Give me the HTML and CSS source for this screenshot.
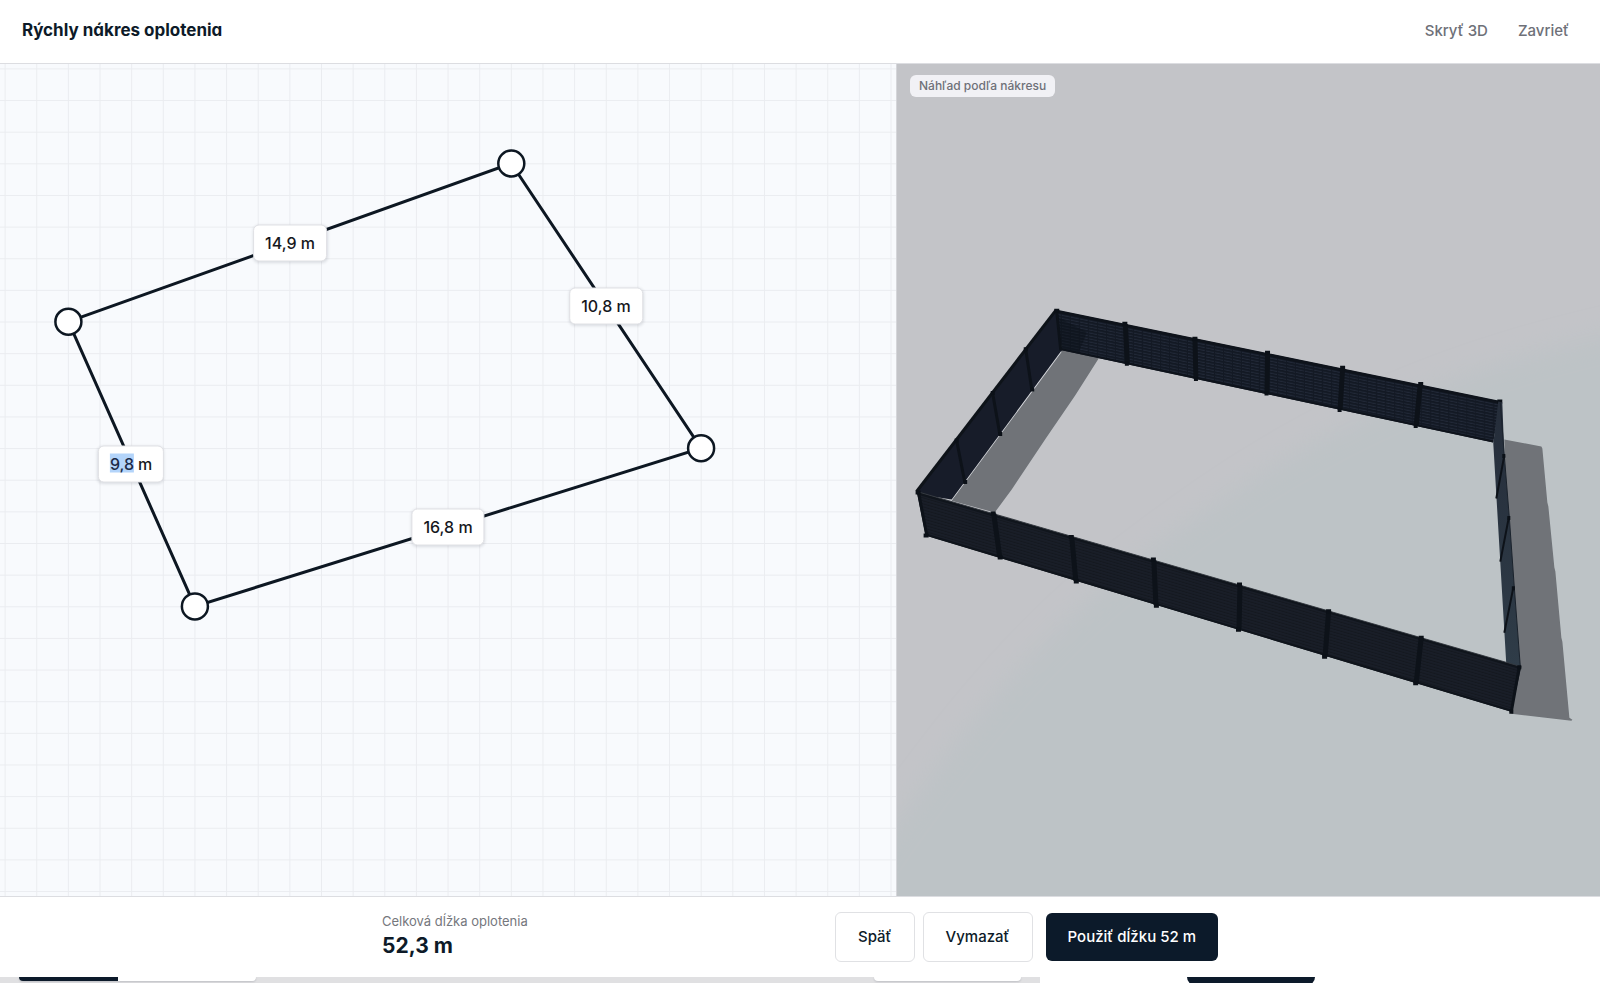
FILE: index.html
```html
<!DOCTYPE html>
<html lang="sk">
<head>
<meta charset="utf-8">
<meta name="viewport" content="width=device-width, initial-scale=1">
<title>Rýchly nákres oplotenia</title>
<link rel="stylesheet" href="styles.css">
</head>
<body>
<div class="app">
  <header class="header">
    <h1 class="title">Rýchly nákres oplotenia</h1>
    <nav class="header-actions">
      <button class="link-btn" type="button">Skryť 3D</button>
      <button class="link-btn" type="button">Zavrieť</button>
    </nav>
  </header>

  <main class="workspace">
    <section class="canvas" aria-label="Nákres">
      <svg class="drawing" aria-hidden="true">
        <defs>
          <pattern id="grid" x="4.6" y="4.4" width="31.64" height="31.64" patternUnits="userSpaceOnUse">
            <path d="M.5 0V31.64M0 .5H31.64" class="grid-line"/>
          </pattern>
        </defs>
        <rect width="100%" height="100%" fill="url(#grid)"/>
        <path class="outline" d="M68.4 257.7L511.3 99.5L701.1 384.2L194.9 542.4Z"/>
        <circle class="node" cx="68.4" cy="257.7" r="13"/>
        <circle class="node" cx="511.3" cy="99.5" r="13"/>
        <circle class="node" cx="701.1" cy="384.2" r="13"/>
        <circle class="node" cx="194.9" cy="542.4" r="13"/>
      </svg>
      <button class="chip chip-top" type="button">14,9 m</button>
      <button class="chip chip-right" type="button">10,8 m</button>
      <button class="chip chip-bottom" type="button">16,8 m</button>
      <label class="chip chip-left"><input class="chip-input" type="text" value="9,8" aria-label="Dĺžka strany">m</label>
    </section>

    <section class="preview" aria-label="Náhľad 3D">
      <svg class="scene" viewBox="897 64 703 831" preserveAspectRatio="xMidYMid slice" aria-hidden="true">
        <defs>
          <filter id="soft" x="-20%" y="-20%" width="140%" height="140%"><feGaussianBlur stdDeviation="12"/></filter>
          <filter id="edge"><feGaussianBlur stdDeviation="0.5"/></filter>
          <pattern id="slatsBack" width="9" height="3" patternUnits="userSpaceOnUse" patternTransform="skewY(11.6)">
            <rect width="9" height="3" fill="#131924"/><path d="M0 1H8" stroke="#222938" stroke-width="1"/>
          </pattern>
          <pattern id="slatsFront" width="12" height="3" patternUnits="userSpaceOnUse" patternTransform="skewY(16.2)">
            <rect width="12" height="3" fill="#191e28"/><path d="M0 1H12" stroke="#14181f" stroke-width="1"/>
          </pattern>
          <linearGradient id="sideRight" x1="0" y1="0" x2="0" y2="1">
            <stop offset="0" stop-color="#252d3a"/><stop offset="1" stop-color="#2f3c48"/>
          </linearGradient>
        </defs>
        <rect x="0" y="0" width="2600" height="1600" fill="#c3c4c8"/>
        <path d="M1660 322C1430 368 1290 440 1130 565C1030 645 960 730 870 860V960H1660Z" fill="#bdc3c6" filter="url(#soft)"/>

        <g filter="url(#edge)">
          <path d="M1062 349L1099 358L1076 394L1074 397L1046 438L1044 441L1014 486L1012 489L995 512L951 500Z" fill="#6f7378"/>
          <path d="M1061 351L951 500" stroke="#dfe0e4" stroke-width="2"/>
          <path d="M1504 439L1541 446L1542 448L1547 502L1548 506L1554 567L1555 571L1561 637L1562 641L1569 717L1572 719L1571 720L1511 713Z" fill="#6f7378"/>
        </g>

        <path d="M1057 310L1500 401L1493 442L1062 350Z" fill="url(#slatsBack)"/>
        <path d="M1057 311L1500 402" stroke="#0e131b" stroke-width="3"/>
        <path d="M1062 349L1493 441" stroke="#0e131b" stroke-width="2"/>
        <path d="M1060 318L1087 332L1079 352L1062 349Z" fill="#0c1119" opacity=".5"/>

        <path d="M1056 310L917 491L920 494L952 499L1062 350Z" fill="#171c29"/>
        <path d="M1056 310L917 491" stroke="#0e1319" stroke-width="3"/>
        <path class="post" d="M1026 349L1032 389M993 393L1000 433M957 440L965 481"/>
        <path class="cap" d="M1024 349h4M991 392.500h4M955 440h4M1030.500 389h4M998.500 433.500h4M963.500 481.500h4"/>

        <path class="post wide" d="M1125.500 324L1127.500 363M1195 339L1196 378M1267.500 353L1267 393M1342.500 368L1340 409M1420 384L1416 425"/>
        <path class="post" d="M1057 311L1061 350"/>
        <path class="cap" d="M1122.500 323.500h5M1192.500 338.500h5M1265 352.500h5M1340 367.500h5M1418 383.500h5M1054.500 310.500h5M1497 401h5M1125 363.500h4M1194 378.500h4M1264.500 393h4M1337.500 409.500h4M1413.500 425.500h4"/>

        <path d="M1498 401L1502 402L1504 455L1509 517L1514 587L1520 666L1506 664L1493 443Z" fill="url(#sideRight)"/>
        <path d="M1500 402L1504 455L1509 517L1514 587L1520 666" fill="none" stroke="#1b232d" stroke-width="1"/>
        <path class="post thin" d="M1504 455L1496 498M1508.500 517L1500 561M1513 587L1504 632"/>
        <path class="cap" d="M1502 455.500h3M1507 517.500h3M1511.500 587.500h3"/>

        <path d="M917 491L1521 666L1511 711L926 535Z" fill="url(#slatsFront)"/>
        <path d="M917 491L1521 666" stroke="#353a40" stroke-width="1"/>
        <path d="M918 493L1519 667" stroke="#10151c" stroke-width="2"/>
        <path d="M926 534L1511 710" stroke="#0f141b" stroke-width="2"/>
        <path class="post wide" d="M994 513L1000 556M1072 537L1076 580M1154 560L1156 604M1240 585L1239 628M1328.500 611L1325 656M1421 637L1416 682"/>
        <path class="post" d="M1519 666L1511 711M919 492L927 534"/>
        <path class="cap" d="M991 513h5M1069 536.500h5M1151 559h5M1237 584h5M1326 610.500h5M1418.500 637h5M1517 666.500h4M916 492h5M998 557h5M1074 581h5M1154 605h5M1236 629h5M1322 656h5M1413 682.500h5M1509 711h4M924 535h5"/>
      </svg>
      <p class="badge">Náhľad podľa nákresu</p>
    </section>
  </main>

  <footer class="footer">
    <div class="footer-inner">
      <div class="total">
        <span class="total-label">Celková dĺžka oplotenia</span>
        <strong class="total-value">52,3 m</strong>
      </div>
      <div class="actions">
        <button class="btn" type="button">Späť</button>
        <button class="btn" type="button">Vymazať</button>
        <button class="btn btn-primary" type="button">Použiť dĺžku 52 m</button>
      </div>
    </div>
  </footer>

  <div class="under" aria-hidden="true">
    <div class="under-main">
      <span class="under-toggle"></span>
      <span class="under-box"></span>
    </div>
    <div class="under-side"><span class="under-cta"></span></div>
  </div>
</div>
</body>
</html>
```
FILE: styles.css
```css
* { box-sizing: border-box; }

body {
  margin: 0;
  background: #fff;
  color: #0d1a28;
  font-family: Inter, "Liberation Sans", sans-serif;
  font-size: 16px;
}

button {
  margin: 0;
  font: inherit;
  color: inherit;
  cursor: pointer;
}

.app {
  display: flex;
  flex-direction: column;
  height: 100vh;
}

.header {
  display: flex;
  align-items: center;
  justify-content: space-between;
  padding: 15px 31px 17px 22px;
  border-bottom: 1px solid #dcdde1;
  line-height: 31px;
}

.title {
  margin: 0;
  font-size: 17px;
  font-weight: 700;
  font-feature-settings: "cv11";
}

.header-actions {
  display: flex;
  gap: 30px;
}

.link-btn {
  padding: 0;
  border: 0;
  background: none;
  color: #6e7078;
  font-size: 15px;
  font-weight: 500;
  line-height: 28px;
}

.workspace {
  flex: 1;
  min-height: 0;
  display: grid;
  grid-template-columns: 56fr 44fr;
}

.canvas {
  position: relative;
  overflow: hidden;
  background: #f8fafd;
}

.drawing,
.scene {
  display: block;
  width: 100%;
  height: 100%;
}

.grid-line {
  fill: none;
  stroke: #14181f;
  stroke-opacity: 0.06;
  stroke-width: 1;
}

.outline {
  fill: none;
  stroke: #0d1722;
  stroke-width: 3;
}

.node {
  fill: #fff;
  stroke: #0d1722;
  stroke-width: 2.5;
}

.post {
  fill: none;
  stroke: #0d1219;
  stroke-width: 3;
}

.post.wide { stroke-width: 5; }

.post.thin { stroke-width: 2; }

.cap {
  fill: none;
  stroke: #0b1017;
  stroke-width: 4;
}

.chip {
  position: absolute;
  display: flex;
  align-items: center;
  justify-content: center;
  gap: 4px;
  height: 37px;
  padding: 0 11px 2px;
  border: 1px solid #e0e1e5;
  border-radius: 6px;
  background: #fff;
  box-shadow: 0 1px 3px rgba(15, 23, 42, 0.12);
  color: #16181d;
  font-weight: 500;
  transform: translate(-50%, -50%);
}

.chip-top { left: 290px; top: 179px; }
.chip-right { left: 606px; top: 242px; }
.chip-bottom { left: 448px; top: 463px; }
.chip-left { left: 131px; top: 400px; }

.chip-input {
  width: 24px;
  height: 19px;
  padding: 0;
  border: 0;
  outline: 0;
  background: #b3d4fa;
  color: #1c2b48;
  font: inherit;
}

.preview {
  position: relative;
  min-width: 0;
  min-height: 0;
  overflow: hidden;
  border-left: 1px solid #d5d6da;
}

.badge {
  position: absolute;
  top: 11px;
  left: 13px;
  margin: 0;
  padding: 0 9px;
  border-radius: 6px;
  background: #f1f1f5;
  color: #6e7078;
  font-size: 12px;
  font-weight: 500;
  line-height: 22px;
}

.footer {
  border-top: 1px solid #dcdde1;
  padding: 15px 24px;
}

.footer-inner {
  display: flex;
  align-items: center;
  justify-content: space-between;
  max-width: 836px;
  margin: 0 auto;
}

.total {
  display: flex;
  flex-direction: column;
}

.total-label {
  color: #75777d;
  font-size: 13px;
  line-height: 17px;
}

.total-value {
  font-size: 21px;
  font-weight: 700;
  line-height: 31px;
}

.actions {
  display: flex;
  align-items: center;
  gap: 8px;
}

.btn {
  padding: 0 22px;
  border: 1px solid #e0e1e4;
  border-radius: 6px;
  background: #fff;
  font-size: 15px;
  font-weight: 500;
  line-height: 48px;
}

.btn-primary {
  margin-left: 5px;
  border: 0;
  background: #0c1a2a;
  color: #fff;
}

.under {
  display: flex;
  height: 6px;
  overflow: hidden;
}

.under-main {
  flex: 0 0 65%;
  display: flex;
  justify-content: space-between;
  align-items: flex-start;
  padding: 0 19px;
  background: #e0e0e2;
}

.under-toggle,
.under-box {
  height: 4px;
  border-radius: 0 0 6px 6px;
  box-shadow: 0 1px 2px rgba(15, 23, 42, 0.15);
}

.under-toggle {
  width: 237px;
  background: linear-gradient(to right, #0c1a2a 99px, #fff 99px);
}

.under-box {
  width: 147px;
  background: #fff;
}

.under-side {
  flex: 1;
  padding-left: 147px;
}

.under-cta {
  display: block;
  width: 128px;
  height: 8px;
  border-radius: 0 0 8px 8px;
  background: #0c1a2a;
}
```
